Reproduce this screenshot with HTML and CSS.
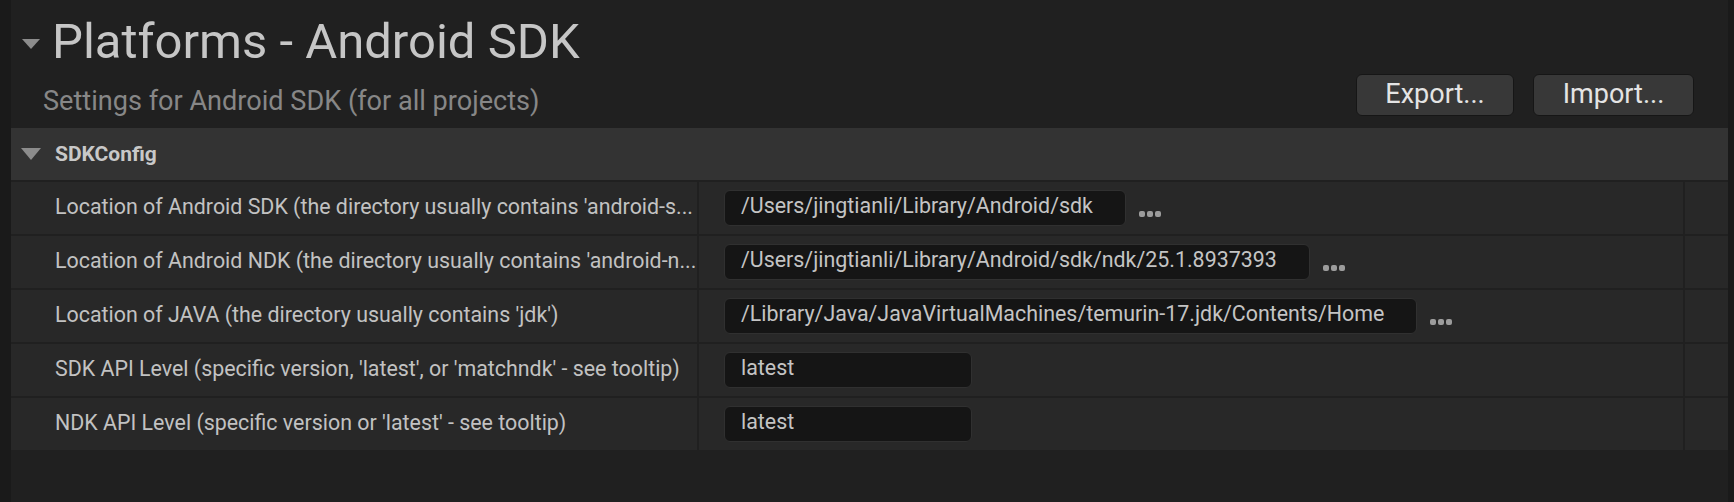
FILE: index.html
```html
<!DOCTYPE html>
<html>
<head>
<meta charset="utf-8">
<link rel="stylesheet" href="styles.css">
</head>
<body>
<div class="panel">
  <div class="head">
    <div class="head-text">
      <div class="title-row">
        <span class="tri tri-title"></span>
        <h1 class="title">Platforms - Android SDK</h1>
      </div>
      <div class="subtitle">Settings for Android SDK (for all projects)</div>
    </div>
    <div class="buttons">
      <button class="btn btn-export">Export...</button>
      <button class="btn btn-import">Import...</button>
    </div>
  </div>
  <div class="category">
    <span class="tri tri-cat"></span>
    <span class="cat-name">SDKConfig</span>
  </div>
  <div class="grid">
    <div class="cell label">Location of Android SDK (the directory usually contains 'android-s...</div>
    <div class="cell value"><div class="input">/Users/jingtianli/Library/Android/sdk</div><span class="dots"><i></i><i></i><i></i></span></div>
    <div class="cell extra"></div>

    <div class="cell label">Location of Android NDK (the directory usually contains 'android-n...</div>
    <div class="cell value"><div class="input">/Users/jingtianli/Library/Android/sdk/ndk/25.1.8937393</div><span class="dots"><i></i><i></i><i></i></span></div>
    <div class="cell extra"></div>

    <div class="cell label">Location of JAVA (the directory usually contains 'jdk')</div>
    <div class="cell value"><div class="input">/Library/Java/JavaVirtualMachines/temurin-17.jdk/Contents/Home</div><span class="dots"><i></i><i></i><i></i></span></div>
    <div class="cell extra"></div>

    <div class="cell label">SDK API Level (specific version, 'latest', or 'matchndk' - see tooltip)</div>
    <div class="cell value"><div class="input input-min">latest</div></div>
    <div class="cell extra"></div>

    <div class="cell label">NDK API Level (specific version or 'latest' - see tooltip)</div>
    <div class="cell value"><div class="input input-min">latest</div></div>
    <div class="cell extra"></div>
  </div>
</div>
</body>
</html>
```
FILE: styles.css
```css
* { box-sizing: border-box; }
html, body { margin: 0; padding: 0; }
body {
  background: #1a1a1a;
  font-family: Roboto, "Liberation Sans", sans-serif;
  width: 1734px;
  height: 502px;
  overflow: hidden;
}
.panel {
  margin: 0 6px 0 11px;
  height: 502px;
  background: #202020;
  display: flex;
  flex-direction: column;
}
.head {
  height: 128px;
  display: flex;
  justify-content: space-between;
  align-items: flex-start;
  padding-right: 34px;
}
.head-text {
  display: flex;
  flex-direction: column;
}
.title-row {
  display: flex;
  align-items: center;
  height: 70px;
  padding-left: 11px;
  padding-top: 14px;
}
.tri {
  display: inline-block;
  width: 0;
  height: 0;
  border-left: 10px solid transparent;
  border-right: 10px solid transparent;
  border-top: 12px solid #8c8c8c;
}
.tri-title {
  border-left-width: 9.5px;
  border-right-width: 9.5px;
  border-top-width: 10px;
  margin-right: 12px;
  margin-top: 3px;
}
.title {
  margin: 0;
  font-weight: 400;
  font-size: 49px;
  line-height: 56px;
  color: #c6c6c6;
}
.subtitle {
  padding-left: 32px;
  margin-top: 16px;
  font-size: 27.1px;
  line-height: 30px;
  color: #878787;
}
.buttons {
  display: flex;
  gap: 19px;
  margin-top: 74px;
}
.btn {
  height: 42px;
  border: 1px solid #161616;
  border-radius: 6px;
  background: #383838;
  color: #e4e4e4;
  font-family: Roboto, "Liberation Sans", sans-serif;
  font-size: 27px;
  padding: 0 0 3px 0;
}
.btn-export { width: 158px; }
.btn-import { width: 161px; }
.category {
  height: 52px;
  background: #333333;
  display: flex;
  align-items: center;
  padding-left: 10px;
}
.tri-cat { margin-right: 14px; }
.cat-name {
  font-weight: 700;
  font-size: 21px;
  color: #c8c8c8;
}
.grid {
  margin-top: 2px;
  display: grid;
  grid-template-columns: 686px 984px 43px;
  grid-auto-rows: 52px;
  gap: 2px;
}
.cell {
  background: #282828;
  display: flex;
  align-items: center;
}
.label {
  padding-left: 44px;
  padding-bottom: 3px;
  font-size: 21.4px;
  color: #c2c2c2;
  white-space: nowrap;
  overflow: hidden;
}
.value { padding-left: 25px; }
.input {
  height: 36px;
  display: flex;
  align-items: center;
  padding: 0 32px 6px 16px;
  background: #151515;
  border: 1.5px solid #303030;
  border-radius: 6px;
  font-size: 21.4px;
  color: #c4c4c4;
  white-space: nowrap;
}
.input-min { width: 248px; }
.dots {
  display: flex;
  gap: 2px;
  margin-left: 13px;
  margin-top: 12px;
}
.dots i {
  width: 6px;
  height: 6px;
  border-radius: 2px;
  background: #9c9c9c;
}
```
